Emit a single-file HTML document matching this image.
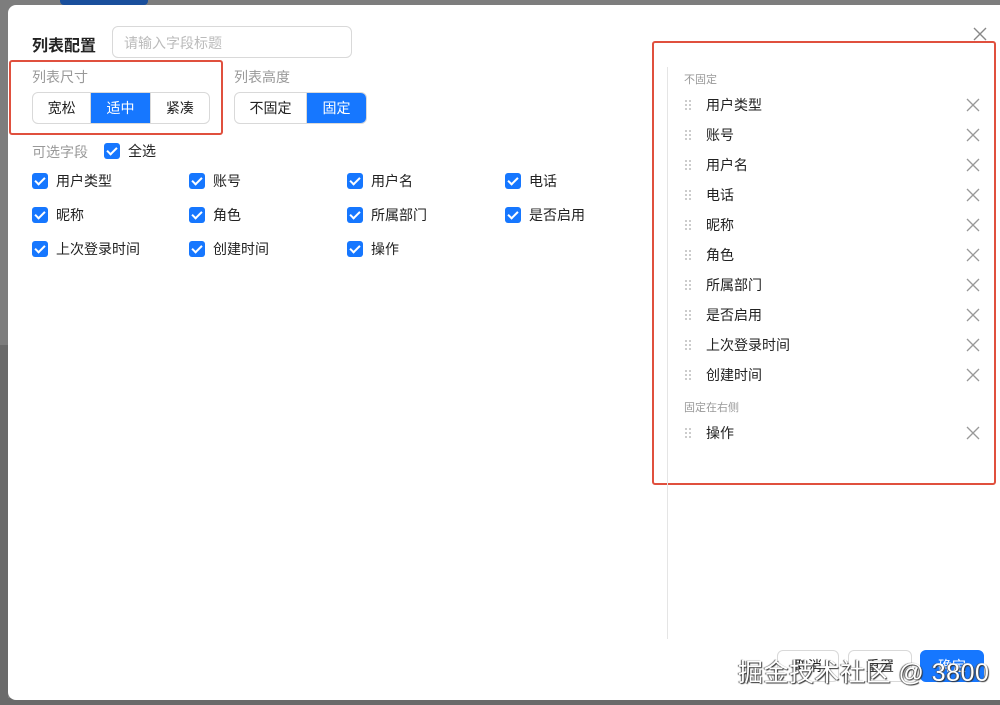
<!DOCTYPE html>
<html><head><meta charset="utf-8"><style>
*{box-sizing:border-box;margin:0;padding:0}
body{width:1000px;height:705px;overflow:hidden;background:#7d7d7d;font-family:"Liberation Sans","Noto Sans CJK SC",sans-serif;position:relative;color:#222}
.abs{position:absolute}
.modal{left:8px;top:5px;width:1000px;height:695px;background:#fff;border-radius:8px}
.cb{position:absolute;width:16px;height:16px;background:#1677ff;border-radius:3px}
.cb:after{content:"";position:absolute;left:5px;top:2px;width:4px;height:8px;border:solid #fff;border-width:0 2px 2px 0;transform:rotate(45deg)}
.lbl{position:absolute;font-size:14px;line-height:16px}
.seg{position:absolute;display:flex;border:1px solid #d9d9d9;border-radius:6px;overflow:hidden;height:32px;font-size:14px}
.seg div{display:flex;align-items:center;justify-content:center;border-right:1px solid #d9d9d9}
.seg div:last-child{border-right:0}
.seg .on{background:#1677ff;color:#fff}
.item{position:absolute;left:684px;font-size:14px;width:300px;height:20px}
.item .d{position:absolute;left:0;top:4px;width:8px;height:12px;background-image:radial-gradient(circle,#bbb 0.8px,transparent 1px);background-size:4px 4px}
.item .t{position:absolute;left:22px;top:0px}
.item .x{position:absolute;left:282px;top:3px;width:14px;height:14px}
.sec{position:absolute;left:684px;font-size:11px;color:#999}
.btn{position:absolute;top:650px;height:32px;border:1px solid #d9d9d9;border-radius:6px;font-size:14px;display:flex;align-items:center;justify-content:center}
</style></head><body>
<div class="abs" style="left:0;top:345px;width:8px;height:360px;background:#6a6a6a"></div>
<div class="abs" style="left:0;top:698px;width:1000px;height:7px;background:#6a6a6a"></div>
<div class="abs" style="left:60px;top:0;width:88px;height:5px;background:#1a4f9c;border-radius:0 0 4px 4px"></div>
<div class="abs modal"></div>
<div class="abs" style="left:32px;top:32px;font-size:16px;font-weight:bold">列表配置</div>
<div class="abs" style="left:112px;top:26px;width:240px;height:32px;border:1px solid #d9d9d9;border-radius:6px;font-size:14px;color:#bbb;padding:6px 11px">请输入字段标题</div>
<div class="abs" style="left:9px;top:60px;width:214px;height:75px;border:2px solid #e0503e;border-radius:3px"></div>
<div class="abs" style="left:32px;top:67px;font-size:14px;color:#999">列表尺寸</div>
<div class="abs" style="left:234px;top:67px;font-size:14px;color:#999">列表高度</div>
<div class="seg" style="left:32px;top:92px;width:178px"><div style="width:59px">宽松</div><div class="on" style="width:60px">适中</div><div style="width:59px">紧凑</div></div>
<div class="seg" style="left:234px;top:92px;width:133px"><div style="width:73px">不固定</div><div class="on" style="width:60px">固定</div></div>
<div class="abs" style="left:32px;top:142px;font-size:14px;color:#999">可选字段</div>
<div class="cb" style="left:104px;top:143px"></div><div class="lbl" style="left:128px;top:143px">全选</div>
<div class="cb" style="left:32px;top:173px"></div><div class="lbl" style="left:56px;top:173px">用户类型</div>
<div class="cb" style="left:189px;top:173px"></div><div class="lbl" style="left:213px;top:173px">账号</div>
<div class="cb" style="left:347px;top:173px"></div><div class="lbl" style="left:371px;top:173px">用户名</div>
<div class="cb" style="left:505px;top:173px"></div><div class="lbl" style="left:529px;top:173px">电话</div>
<div class="cb" style="left:32px;top:207px"></div><div class="lbl" style="left:56px;top:207px">昵称</div>
<div class="cb" style="left:189px;top:207px"></div><div class="lbl" style="left:213px;top:207px">角色</div>
<div class="cb" style="left:347px;top:207px"></div><div class="lbl" style="left:371px;top:207px">所属部门</div>
<div class="cb" style="left:505px;top:207px"></div><div class="lbl" style="left:529px;top:207px">是否启用</div>
<div class="cb" style="left:32px;top:241px"></div><div class="lbl" style="left:56px;top:241px">上次登录时间</div>
<div class="cb" style="left:189px;top:241px"></div><div class="lbl" style="left:213px;top:241px">创建时间</div>
<div class="cb" style="left:347px;top:241px"></div><div class="lbl" style="left:371px;top:241px">操作</div>
<svg class="abs" style="left:973px;top:27px" width="14" height="14" viewBox="0 0 14 14"><path d="M1 1L13 13M13 1L1 13" stroke="#888" stroke-width="1.4"/></svg>
<div class="abs" style="left:652px;top:41px;width:344px;height:444px;border:2px solid #e0503e;border-radius:3px"></div>
<div class="abs" style="left:667px;top:67px;width:1px;height:572px;background:#e5e5e5"></div>
<div class="sec" style="top:71px">不固定</div>
<div class="item" style="top:95px"><div class="d"></div><div class="t">用户类型</div><svg class="x" viewBox="0 0 14 14"><path d="M1 1L13 13M13 1L1 13" stroke="#999" stroke-width="1.3"/></svg></div>
<div class="item" style="top:125px"><div class="d"></div><div class="t">账号</div><svg class="x" viewBox="0 0 14 14"><path d="M1 1L13 13M13 1L1 13" stroke="#999" stroke-width="1.3"/></svg></div>
<div class="item" style="top:155px"><div class="d"></div><div class="t">用户名</div><svg class="x" viewBox="0 0 14 14"><path d="M1 1L13 13M13 1L1 13" stroke="#999" stroke-width="1.3"/></svg></div>
<div class="item" style="top:185px"><div class="d"></div><div class="t">电话</div><svg class="x" viewBox="0 0 14 14"><path d="M1 1L13 13M13 1L1 13" stroke="#999" stroke-width="1.3"/></svg></div>
<div class="item" style="top:215px"><div class="d"></div><div class="t">昵称</div><svg class="x" viewBox="0 0 14 14"><path d="M1 1L13 13M13 1L1 13" stroke="#999" stroke-width="1.3"/></svg></div>
<div class="item" style="top:245px"><div class="d"></div><div class="t">角色</div><svg class="x" viewBox="0 0 14 14"><path d="M1 1L13 13M13 1L1 13" stroke="#999" stroke-width="1.3"/></svg></div>
<div class="item" style="top:275px"><div class="d"></div><div class="t">所属部门</div><svg class="x" viewBox="0 0 14 14"><path d="M1 1L13 13M13 1L1 13" stroke="#999" stroke-width="1.3"/></svg></div>
<div class="item" style="top:305px"><div class="d"></div><div class="t">是否启用</div><svg class="x" viewBox="0 0 14 14"><path d="M1 1L13 13M13 1L1 13" stroke="#999" stroke-width="1.3"/></svg></div>
<div class="item" style="top:335px"><div class="d"></div><div class="t">上次登录时间</div><svg class="x" viewBox="0 0 14 14"><path d="M1 1L13 13M13 1L1 13" stroke="#999" stroke-width="1.3"/></svg></div>
<div class="item" style="top:365px"><div class="d"></div><div class="t">创建时间</div><svg class="x" viewBox="0 0 14 14"><path d="M1 1L13 13M13 1L1 13" stroke="#999" stroke-width="1.3"/></svg></div>
<div class="sec" style="top:399px">固定在右侧</div>
<div class="item" style="top:423px"><div class="d"></div><div class="t">操作</div><svg class="x" viewBox="0 0 14 14"><path d="M1 1L13 13M13 1L1 13" stroke="#999" stroke-width="1.3"/></svg></div>
<div class="btn" style="left:777px;width:62px">取消</div>
<div class="btn" style="left:848px;width:64px">重置</div>
<div class="btn" style="left:920px;width:64px;background:#1677ff;border-color:#1677ff;color:#fff">确定</div>
<div class="abs" style="left:738px;top:653px;font-size:25px;letter-spacing:0.5px;color:#fff;text-shadow:1px 1px 1px #333,-1px 0 1px #555;white-space:nowrap">掘金技术社区 @ 3800</div>
</body></html>
